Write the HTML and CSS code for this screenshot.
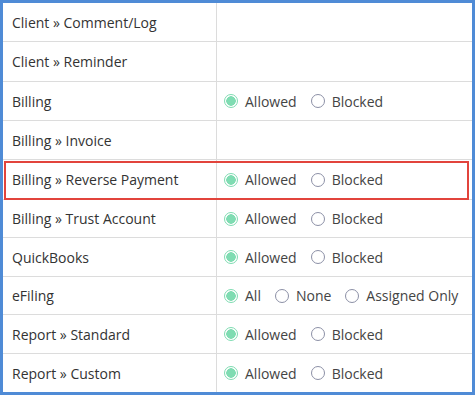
FILE: index.html
```html
<!DOCTYPE html>
<html lang="en">
<head>
    <meta charset="UTF-8">
    <meta name="viewport" content="width=device-width, initial-scale=1.0">
    <title>Permissions</title>
    <link rel="stylesheet" href="styles.css">
</head>
<body>
    <div class="frame">
        <div class="perm-table">
            <div class="perm-row">
                <div class="perm-name">Client » Comment/Log</div>
                <div class="perm-value"></div>
            </div>
            <div class="perm-row">
                <div class="perm-name">Client » Reminder</div>
                <div class="perm-value"></div>
            </div>
            <div class="perm-row">
                <div class="perm-name">Billing</div>
                <div class="perm-value">
                    <label class="opt"><span class="radio checked"></span>Allowed</label>
                    <label class="opt"><span class="radio"></span>Blocked</label>
                </div>
            </div>
            <div class="perm-row">
                <div class="perm-name">Billing » Invoice</div>
                <div class="perm-value"></div>
            </div>
            <div class="perm-row highlight">
                <div class="perm-name">Billing » Reverse Payment</div>
                <div class="perm-value">
                    <label class="opt"><span class="radio checked"></span>Allowed</label>
                    <label class="opt"><span class="radio"></span>Blocked</label>
                </div>
            </div>
            <div class="perm-row">
                <div class="perm-name">Billing » Trust Account</div>
                <div class="perm-value">
                    <label class="opt"><span class="radio checked"></span>Allowed</label>
                    <label class="opt"><span class="radio"></span>Blocked</label>
                </div>
            </div>
            <div class="perm-row">
                <div class="perm-name">QuickBooks</div>
                <div class="perm-value">
                    <label class="opt"><span class="radio checked"></span>Allowed</label>
                    <label class="opt"><span class="radio"></span>Blocked</label>
                </div>
            </div>
            <div class="perm-row">
                <div class="perm-name">eFiling</div>
                <div class="perm-value">
                    <label class="opt"><span class="radio checked"></span>All</label>
                    <label class="opt"><span class="radio"></span>None</label>
                    <label class="opt"><span class="radio"></span>Assigned Only</label>
                </div>
            </div>
            <div class="perm-row">
                <div class="perm-name">Report » Standard</div>
                <div class="perm-value">
                    <label class="opt"><span class="radio checked"></span>Allowed</label>
                    <label class="opt"><span class="radio"></span>Blocked</label>
                </div>
            </div>
            <div class="perm-row">
                <div class="perm-name">Report » Custom</div>
                <div class="perm-value">
                    <label class="opt"><span class="radio checked"></span>Allowed</label>
                    <label class="opt"><span class="radio"></span>Blocked</label>
                </div>
            </div>
        </div>
    </div>
</body>
</html>
```

FILE: styles.css
```css
body {
    margin: 0;
    font-family: 'Open Sans', sans-serif;
    color: #333;
    background: #fff;
}

/* Blue screenshot frame */
.frame {
    width: 475px;
    height: 395px;
    box-sizing: border-box;
    border: 3px solid #4f8bd6;
    overflow: hidden;
}

.perm-table {
    display: grid;
    grid-template-rows: 39px 40px 39px 39px 40px 38px 39px 38px 39px 38px;
}

.perm-row {
    position: relative;
    display: grid;
    grid-template-columns: 214px 1fr;
    border-bottom: 1px solid #dcdcdc;
}

.perm-row:last-child {
    border-bottom: none;
}

.perm-name {
    display: flex;
    align-items: center;
    padding-left: 9px;
    font-size: 14px;
    border-right: 1px solid #dcdcdc;
}

.perm-value {
    display: flex;
    align-items: center;
    gap: 14px;
    padding-left: 7px;
    font-size: 14px;
    color: #444;
}

.opt {
    display: flex;
    align-items: center;
    gap: 7px;
}

/* Radio buttons */
.radio {
    width: 14px;
    height: 14px;
    box-sizing: border-box;
    border-radius: 50%;
    border: 1px solid #8c90a6;
    background: #fff;
}

.radio.checked {
    border: 1.5px solid #7fdcb2;
    background: radial-gradient(circle, #7fdcb2 0 4.5px, #fff 5px);
}

/* Red annotation box */
.highlight::after {
    content: "";
    position: absolute;
    left: 1px;
    right: 3px;
    top: 1px;
    bottom: -1px;
    border: 2px solid #e2443c;
    pointer-events: none;
}
```
